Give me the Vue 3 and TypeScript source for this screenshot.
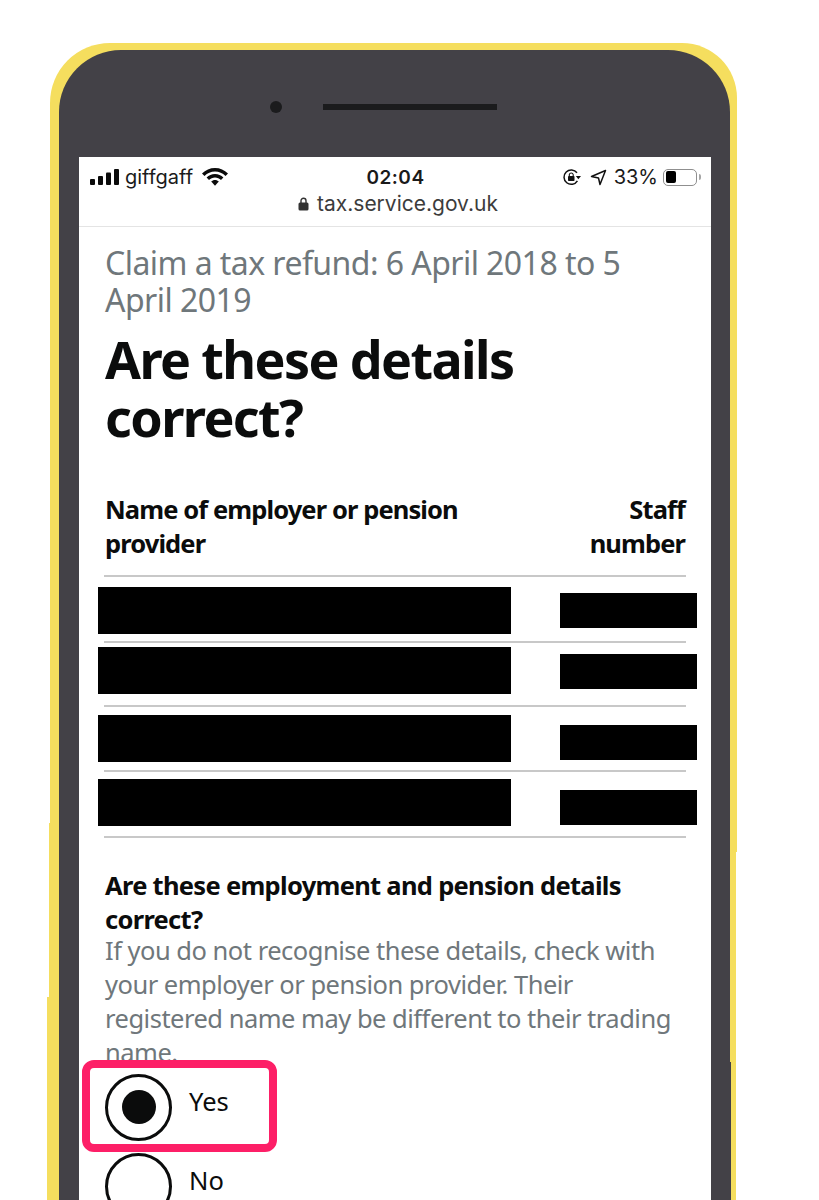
<script setup lang="ts">
interface Row {
  height: number
  nameTop: number
  staffTop: number
}
const rows: Row[] = [
  { height: 66, nameTop: 10, staffTop: 16 },
  { height: 64, nameTop: 4, staffTop: 11 },
  { height: 65, nameTop: 8, staffTop: 18 },
  { height: 66, nameTop: 7, staffTop: 18 },
]
</script>

<template>
  <main class="page">
    <section class="phone">
      <span class="edge edge-left-a"></span>
      <span class="edge edge-left-b"></span>
      <span class="edge edge-right-a"></span>
      <span class="edge edge-right-b"></span>
      <div class="body">
        <div class="bezel">
          <span class="camera"></span>
          <span class="speaker"></span>
        </div>
        <div class="screen">
          <header class="chrome">
            <div class="status">
              <div class="status-left">
                <svg class="signal" viewBox="0 0 29 16" width="29" height="16">
                  <rect x="0" y="10" width="5" height="6" rx="1" />
                  <rect x="8" y="7" width="5" height="9" rx="1" />
                  <rect x="16" y="3.500" width="5" height="12.500" rx="1" />
                  <rect x="24" y="0" width="5" height="16" rx="1" />
                </svg>
                <span>giffgaff</span>
                <svg class="wifi" viewBox="0 0 26 18" width="26" height="18">
                  <path d="M13 0C8 0 3.500 2 0 5.500L2.500 8C5.300 5.200 9 3.600 13 3.600S20.700 5.200 23.500 8L26 5.500C22.500 2 18 0 13 0Z" />
                  <path d="M13 6C9.700 6 6.800 7.300 4.600 9.500L7 12C8.600 10.400 10.700 9.500 13 9.500S17.400 10.400 19 12L21.400 9.500C19.200 7.300 16.300 6 13 6Z" />
                  <path d="M13 12C11.500 12 10.200 12.600 9.200 13.600L13 17.800L16.800 13.600C15.800 12.600 14.500 12 13 12Z" />
                </svg>
              </div>
              <strong class="time">02:04</strong>
              <div class="status-right">
                <svg class="lock-rotate" viewBox="0 0 18 18" width="18" height="18">
                  <path d="M14 4.800A7.200 7.200 0 1 0 14.400 12.800" fill="none" stroke="#111" stroke-width="1.500" />
                  <path d="M12.800 8H18L15.400 11.200Z" fill="#111" />
                  <rect x="5" y="8" width="6.500" height="5" rx=".8" fill="#111" />
                  <path d="M6.300 8V6.500A2 2 0 0 1 10.200 6.500V8" fill="none" stroke="#111" stroke-width="1.100" />
                </svg>
                <svg class="arrow" viewBox="0 0 17 17" width="17" height="17">
                  <path d="M15.500 1.500L1.500 7.500L8.500 9L10 15.500Z" fill="none" stroke="#111" stroke-width="1.500" stroke-linejoin="round" />
                </svg>
                <span>33%</span>
                <span class="battery"><i></i></span>
                <span class="nub"></span>
              </div>
            </div>
            <div class="address">
              <svg viewBox="0 0 11 14" width="11" height="14">
                <rect x="0.500" y="5.500" width="10" height="8" rx="1.500" />
                <path d="M3 6V3.800A2.500 2.500 0 0 1 8 3.800V6" fill="none" stroke="#333" stroke-width="1.400" />
              </svg>
              <span>tax.service.gov.uk</span>
            </div>
          </header>

          <article class="content">
            <p class="caption">Claim a tax refund: 6 April 2018 to 5 April 2019</p>
            <h1>Are these details correct?</h1>

            <div class="table-head">
              <span class="col-name">Name of employer or pension provider</span>
              <span class="col-staff">Staff number</span>
            </div>

            <div class="rows">
              <div v-for="(row, i) in rows" :key="i" class="row" :style="{ height: row.height + 'px' }">
                <span class="redact redact-name" :style="{ top: row.nameTop + 'px' }"></span>
                <span class="redact redact-staff" :style="{ top: row.staffTop + 'px' }"></span>
              </div>
            </div>

            <h2>Are these employment and pension details correct?</h2>
            <p class="hint">If you do not recognise these details, check with your employer or pension provider. Their registered name may be different to their trading name.</p>

            <div class="options">
              <label class="option selected">
                <span class="radio"><i></i></span>
                <span class="option-text">Yes</span>
              </label>
              <label class="option">
                <span class="radio"></span>
                <span class="option-text">No</span>
              </label>
            </div>
          </article>
        </div>
      </div>
    </section>
  </main>
</template>

<style>
html, body { margin: 0; background: #fff; }
</style>

<style scoped>
.page {
  height: 1200px;
  overflow: hidden;
  padding: 43px 82px 0 50px;
  box-sizing: border-box;
  background: #fff;
}
.phone {
  position: relative;
  height: 1300px;
  box-sizing: border-box;
  background: #f5de5e;
  border-radius: 60px 55px 0 0;
  padding: 7px 7px 0 9px;
}
.body {
  height: 100%;
  box-sizing: border-box;
  background: #434147;
  border-radius: 62px 62px 0 0;
  padding: 0 19px 0 20px;
}
.edge { position: absolute; }
.edge-left-a { left: -1px; top: 780px; width: 1px; height: 174px; background: #f5de5e; }
.edge-left-b { left: -3px; top: 954px; width: 3px; height: 300px; background: #f5de5e; }
.edge-right-a { right: 0; top: 809px; width: 1px; height: 400px; background: #fff; }
.edge-right-b { right: 6px; top: 1019px; width: 1px; height: 200px; background: #434147; }
.bezel {
  height: 107px;
  box-sizing: border-box;
  display: flex;
  align-items: center;
  justify-content: center;
  gap: 41px;
  padding: 7px 24px 0 0;
}
.camera {
  width: 12px;
  height: 12px;
  border-radius: 50%;
  background: #1b1b1d;
}
.speaker {
  width: 174px;
  height: 6px;
  background: #1b1b1d;
}
.screen {
  background: #fff;
  height: 1200px;
}
.chrome {
  height: 70px;
  box-sizing: border-box;
  border-bottom: 1px solid #e4e4e4;
  font-family: Inter, "Liberation Sans", sans-serif;
  color: #1a1a1a;
  padding: 8px 10px 0 11px;
}
.status {
  height: 24px;
  display: grid;
  grid-template-columns: 1fr auto 1fr;
  align-items: center;
  font-size: 20px;
}
.status-left, .status-right {
  display: flex;
  align-items: center;
}
.status-left { gap: 6px; }
.status-right { justify-content: flex-end; gap: 6px; }
.signal, .wifi { fill: #0b0b0b; }
.wifi { margin-left: 3px; }
.lock-rotate { margin-right: 3px; }
.arrow { margin-right: 1px; }
.time {
  font-size: 19px;
  font-weight: 600;
  letter-spacing: 0.5px;
}
.battery {
  width: 34px;
  height: 17px;
  box-sizing: border-box;
  border: 1px solid #8f8f8f;
  border-radius: 5px;
  padding: 1.500px 2px;
  display: flex;
  margin-left: -1px;
}
.battery i {
  width: 10px;
  background: #000;
  border-radius: 2px;
}
.nub {
  width: 2px;
  height: 6px;
  background: #a5a5a5;
  border-radius: 0 2px 2px 0;
  margin-left: -4px;
}
.address {
  display: flex;
  align-items: center;
  justify-content: center;
  gap: 8px;
  font-size: 21px;
  color: #3c3c3c;
  margin: 2px 0 0 5px;
}
.address svg { fill: #333; }

.content {
  padding: 17px 26px 0 26px;
  font-family: "Noto Sans", Lato, sans-serif;
  color: #0b0c0c;
}
.caption {
  margin: 0;
  font-size: 32px;
  line-height: 37px;
  letter-spacing: -0.55px;
  color: #6f777b;
}
h1 {
  margin: 12px 0 0;
  font-size: 52px;
  line-height: 58px;
  font-weight: 700;
  letter-spacing: -1.6px;
}
.table-head {
  display: flex;
  justify-content: space-between;
  font-size: 25.500px;
  line-height: 34px;
  font-weight: 700;
  letter-spacing: -0.9px;
  margin-top: 46px;
  padding-bottom: 15px;
}
.col-name { width: 370px; }
.col-staff { width: 110px; text-align: right; }
.rows {
  border-top: 2px solid #c8c8c8;
  margin: 0 -1px 30px;
}
.row {
  position: relative;
  box-sizing: border-box;
  border-bottom: 2px solid #c8c8c8;
}
.redact {
  position: absolute;
  background: #000;
}
.redact-name { left: -6px; width: 413px; height: 47px; }
.redact-staff { left: 456px; width: 137px; height: 35px; }
h2 {
  margin: 0;
  font-size: 25.500px;
  line-height: 34px;
  font-weight: 700;
  letter-spacing: -0.7px;
}
.hint {
  margin: -3px 0 0;
  font-size: 25.500px;
  line-height: 34px;
  letter-spacing: -0.5px;
  color: #6f777b;
}
.options {
  display: flex;
  flex-direction: column;
  gap: 15px;
  margin-top: 6px;
}
.option {
  position: relative;
  display: flex;
  align-items: center;
  gap: 17px;
  font-size: 25.500px;
  height: 64px;
}
.option-text { padding-bottom: 12px; }
.option.selected::after {
  content: "";
  position: absolute;
  left: -23px;
  top: -15px;
  width: 195px;
  height: 92px;
  box-sizing: border-box;
  border: 8px solid #fd1f67;
  border-radius: 12px;
}
.radio {
  width: 67px;
  height: 67px;
  box-sizing: border-box;
  border: 3px solid #0b0c0c;
  border-radius: 50%;
  display: flex;
  align-items: center;
  justify-content: center;
  background: #fff;
  flex: none;
}
.radio i {
  width: 34px;
  height: 34px;
  border-radius: 50%;
  background: #0b0c0c;
}
</style>
